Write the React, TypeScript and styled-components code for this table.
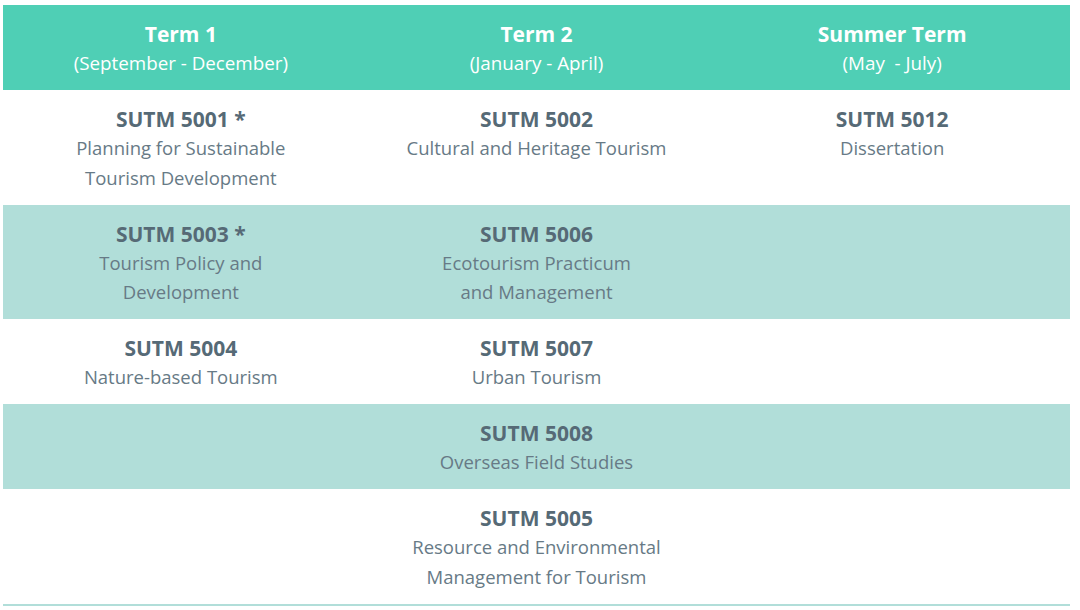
import React from "react";
import styled, { createGlobalStyle } from "styled-components";

const Global = createGlobalStyle`
  html, body { margin: 0; padding: 0; background: #ffffff; }
  body { font-family: "Open Sans", "Liberation Sans", sans-serif; }
`;

const Wrap = styled.div`
  padding: 5px 10px 0 3px;
`;

const Table = styled.table`
  width: 1067px;
  border-collapse: collapse;
  table-layout: fixed;
  border-bottom: 2px solid #b1ded9;
`;

const HeadCell = styled.th`
  background: #4fcfb5;
  color: #ffffff;
  text-align: center;
  vertical-align: top;
  padding: 15px 8px 12px;
  height: 58px;
  line-height: 29px;
  font-weight: 400;
`;

const HeadTitle = styled.div`
  font-size: 21px;
  font-weight: 700;
`;

const HeadSub = styled.div`
  font-size: 18.8px;
`;

const Row = styled.tr<{ $alt?: boolean }>`
  background: ${(p) => (p.$alt ? "#b1ded9" : "#ffffff")};
`;

const Cell = styled.td`
  text-align: center;
  vertical-align: top;
  padding: 16px 8px 12.5px;
  color: #5c6f7b;
`;

const Code = styled.div`
  font-size: 21px;
  line-height: 27px;
  font-weight: 700;
  color: #566a76;
`;

const Desc = styled.div`
  font-size: 18.5px;
  line-height: 29.5px;
  color: #677a86;
`;

type Course = { code: string; lines: string[] } | null;

const rows: Course[][] = [
  [
    { code: "SUTM 5001 *", lines: ["Planning for Sustainable", "Tourism Development"] },
    { code: "SUTM 5002", lines: ["Cultural and Heritage Tourism"] },
    { code: "SUTM 5012", lines: ["Dissertation"] },
  ],
  [
    { code: "SUTM 5003 *", lines: ["Tourism Policy and", "Development"] },
    { code: "SUTM 5006", lines: ["Ecotourism Practicum", "and Management"] },
    null,
  ],
  [
    { code: "SUTM 5004", lines: ["Nature-based Tourism"] },
    { code: "SUTM 5007", lines: ["Urban Tourism"] },
    null,
  ],
  [null, { code: "SUTM 5008", lines: ["Overseas Field Studies"] }, null],
  [
    null,
    { code: "SUTM 5005", lines: ["Resource and Environmental", "Management for Tourism"] },
    null,
  ],
];

const heads = [
  ["Term 1", "(September - December)"],
  ["Term 2", "(January - April)"],
  ["Summer Term", "(May\u00a0 - July)"],
];

export default function App() {
  return (
    <>
      <Global />
      <Wrap>
        <Table>
          <thead>
            <tr>
              {heads.map(([t, s]) => (
                <HeadCell key={t}>
                  <HeadTitle>{t}</HeadTitle>
                  <HeadSub>{s}</HeadSub>
                </HeadCell>
              ))}
            </tr>
          </thead>
          <tbody>
            {rows.map((r, i) => (
              <Row key={i} $alt={i % 2 === 1}>
                {r.map((c, j) => (
                  <Cell key={j}>
                    {c && (
                      <>
                        <Code>{c.code}</Code>
                        {c.lines.map((l) => (
                          <Desc key={l}>{l}</Desc>
                        ))}
                      </>
                    )}
                  </Cell>
                ))}
              </Row>
            ))}
          </tbody>
        </Table>
      </Wrap>
    </>
  );
}
